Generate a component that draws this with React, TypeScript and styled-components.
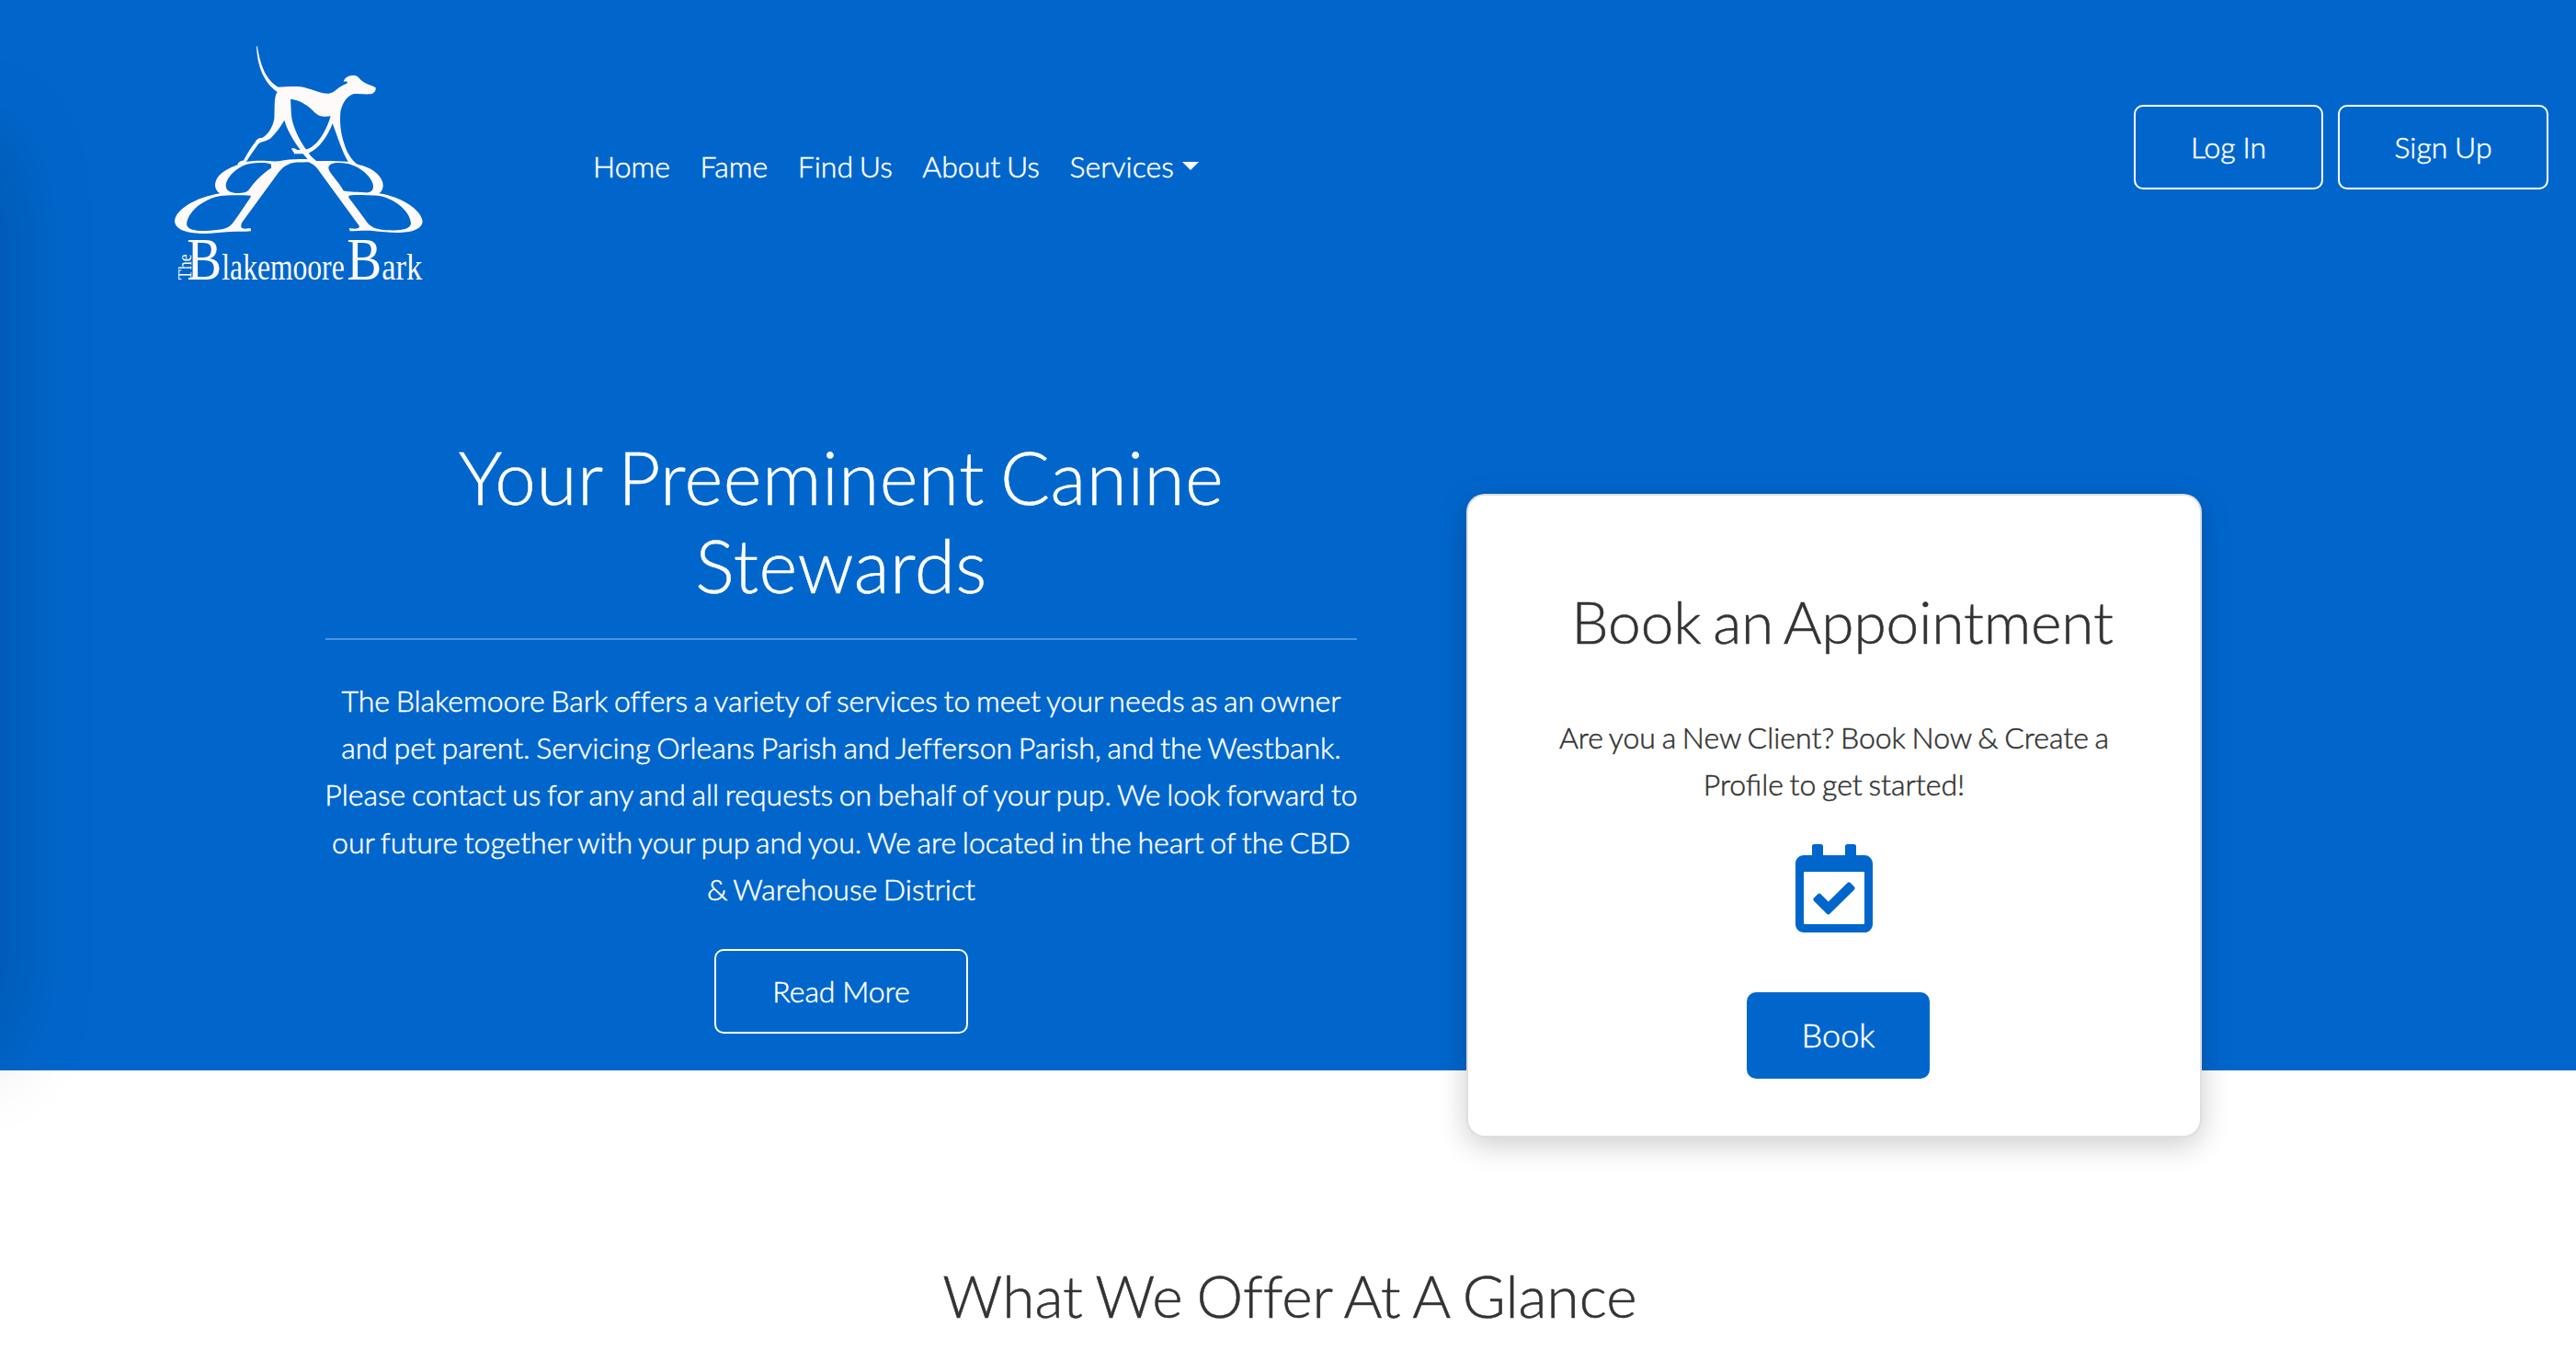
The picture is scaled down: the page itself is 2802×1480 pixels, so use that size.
import React from "react";
import styled, { createGlobalStyle } from "styled-components";
import { FaRegCalendarCheck } from "react-icons/fa";

const blue = "#0066cc";
const ink = "#333333";

const GlobalStyle = createGlobalStyle`
  *, *::before, *::after { box-sizing: border-box; }
  html, body { margin: 0; padding: 0; }
  body {
    width: 2802px;
    height: 1480px;
    overflow: hidden;
    background: #ffffff;
    color: ${ink};
    font-family: Lato, "Noto Sans", sans-serif;
    font-size: 32px;
    font-weight: 300;
    line-height: 1.6;
    word-spacing: -2px;
    -webkit-text-stroke: 0.5px currentColor;
  }
`;

const Page = styled.div`
  position: relative;
  height: 1480px;
  overflow: hidden;
`;

const DrawerShadow = styled.div`
  position: absolute;
  z-index: 2;
  left: -400px;
  top: 120px;
  width: 400px;
  height: 990px;
  box-shadow: 0 32px 96px rgba(0, 0, 0, 0.2);
`;

const Hero = styled.section`
  height: 1164px;
  background: ${blue};
  color: #ffffff;
`;

const Header = styled.header`
  display: flex;
  align-items: flex-start;
  height: 470px;
  padding: 30px 30px 0 170px;
`;

const Brand = styled.a`
  display: block;
  width: 310px;
  height: 300px;
  margin-right: 165px;
`;

const LogoSvg = styled.svg`
  display: block;
  width: 310px;
  height: 300px;
`;

const Nav = styled.nav`
  display: flex;
  gap: 32.6px;
  margin-top: 125px;
`;

const NavLink = styled.a`
  display: flex;
  align-items: center;
  color: #ffffff;
  text-decoration: none;
  white-space: nowrap;
`;

const Caret = styled.span`
  margin-left: 9px;
  border-top: 9.6px solid #ffffff;
  border-left: 9.6px solid transparent;
  border-right: 9.6px solid transparent;
`;

const Actions = styled.div`
  display: flex;
  gap: 16px;
  margin-left: auto;
  margin-top: 84px;
`;

const OutlineButton = styled.button<{ $width: number }>`
  width: ${(p) => p.$width}px;
  height: 92px;
  padding: 0;
  border: 2px solid #ffffff;
  border-radius: 10px;
  background: transparent;
  color: #ffffff;
  font: inherit;
  word-spacing: -1px;
`;

const HeroRow = styled.div`
  display: flex;
  align-items: flex-start;
  padding-left: 354px;
`;

const Intro = styled.div`
  width: 1122px;
  text-align: center;
`;

const Title = styled.h1`
  margin: 0;
  font-size: 80px;
  font-weight: 300;
  line-height: 96px;
  letter-spacing: 0.5px;
  word-spacing: -5px;
`;

const Rule = styled.hr`
  height: 2px;
  margin: 32px 0 40px;
  border: 0;
  background: rgba(255, 255, 255, 0.3);
`;

const Copy = styled.p`
  display: flex;
  flex-direction: column;
  align-items: center;
  margin: 0 0 40px;
  font-variant-ligatures: none;
`;

const Line = styled.span`
  display: block;
  white-space: nowrap;
`;

const Card = styled.article`
  display: flex;
  flex-direction: column;
  align-items: center;
  width: 800px;
  height: 700px;
  margin: 67px 0 0 119px;
  padding-top: 99px;
  border: 2px solid rgba(0, 0, 0, 0.125);
  border-radius: 20px;
  background: #ffffff;
  box-shadow: 0 8px 32px rgba(0, 0, 0, 0.2);
  color: ${ink};
  text-align: center;
`;

const Heading = styled.h2`
  margin: 0;
  padding-left: 4px;
  font-size: 64px;
  font-weight: 300;
  line-height: 76.8px;
  word-spacing: -2.6px;
  white-space: nowrap;
  font-variant-ligatures: none;
`;

const CardHeading = styled(Heading)`
  padding-left: 18px;
  letter-spacing: -0.15px;
  word-spacing: -4.5px;
`;

const CardCopy = styled.p`
  margin: 61px 0 40px;
`;

const CardIcon = styled(FaRegCalendarCheck)`
  width: 84px;
  height: 96px;
  color: ${blue};
`;

const BookButton = styled.button`
  width: 199px;
  height: 94px;
  margin: 65px 0 0 9px;
  padding: 0;
  border: 0;
  border-radius: 10px;
  background: ${blue};
  color: #ffffff;
  font: inherit;
  font-size: 36px;
`;

const Offer = styled.section`
  padding-top: 207px;
  text-align: center;
`;

const LogoText = styled.text`
  fill: #fffafa;
  font-family: "Liberation Serif", serif;
  font-weight: 400;
  -webkit-text-stroke: 0;
`;

const introLines = [
  "The Blakemoore Bark offers a variety of services to meet your needs as an owner",
  "and pet parent. Servicing Orleans Parish and Jefferson Parish, and the Westbank.",
  "Please contact us for any and all requests on behalf of your pup. We look forward to",
  "our future together with your pup and you. We are located in the heart of the CBD",
  "& Warehouse District",
];

const navItems = ["Home", "Fame", "Find Us", "About Us"];

function Logo() {
  return (
    <LogoSvg viewBox="0 0 930 900">
      <g fill="#fffafa" fillRule="evenodd">
        {/* greyhound */}
        <path
          d="M330 62 C338 112 353 168 398 194 C430 193 460 189 490 197 C520 205 540 216 562 215
             C582 213 588 196 622 182 C626 178 624 175 611 176 C615 164 624 157 642 156
             C654 156 660 161 668 172 C682 184 700 187 716 196 C717 206 712 215 700 217
             C680 219 660 214 642 217 C620 225 606 250 601 275 C598 312 602 342 612 375
             C621 405 634 430 657 447 L627 439 C607 408 590 352 575 313
             C562 350 532 396 495 411 L480 412 L450 412 C450 405 442 402 441 394 L451 394 L460 399 L482 399
             C520 395 552 345 569 289 C545 292 530 290 515 275 C500 257 470 236 438 233
             C440 270 440 290 445 308 C455 345 475 380 497 408 C502 420 520 432 530 442 L510 446 L494 430
             C460 388 430 345 418 302 C405 325 390 345 372 362 C355 372 340 372 334 379
             C320 398 305 420 292 440 L266 449 C264 442 272 436 285 433
             C295 415 308 392 322 375 C327 366 331 360 345 360 C365 350 380 325 385 298
             C387 265 383 225 395 210 C348 178 329 120 327 60 Z"
          fillRule="nonzero"
        />
        {/* mirrored letter on the left */}
        <path
          d="M266 448 L292 438 C340 430 370 438 400 436 C430 430 460 428 500 430 L502 439 C470 440 445 438 432 446
             C420 450 410 458 400 471 L280 635 C274 648 275 656 290 656 C298 655 304 655 308 655 L309 664
             C290 667 260 664 230 667 C200 670 170 673 138 671 C90 669 62 655 60 632
             C62 595 125 555 207 541 C195 533 191 520 192 510 C197 478 230 460 266 448 Z
             M375 447 C366 440 335 440 306 444 C262 452 226 492 227 517 C228 534 245 540 265 540
             C285 539 295 539 303 528 C325 496 350 474 375 458 Z
             M308 548 C275 546 235 546 210 549 C150 560 102 602 99 642 C102 658 125 664 160 663
             C205 661 233 659 248 640 C270 610 290 580 308 553 Z"
        />
        {/* letter on the right */}
        <path
          d="M494 430 C503 439 560 433 590 436 L640 438 C648 443 658 447 672 450 C712 461 740 490 740 514
             C740 525 737 534 727 541 C800 552 867 596 869 634 C866 655 840 668 795 669
             C765 670 735 666 705 663 C680 660 655 664 632 664 L629 655 C645 656 658 658 662 652
             C664 646 658 642 652 633 L532 469 C522 452 508 442 494 438 Z
             M562 458 C562 440 592 439 620 443 C666 450 708 492 708 517 C708 536 695 540 680 538
             C645 535 622 537 610 531 C596 501 564 477 562 458 Z
             M628 549 C640 543 700 548 728 549 C784 560 831 604 831 640 C827 660 792 663 762 661
             C720 660 704 652 690 638 C668 608 648 580 628 555 Z"
        />
      </g>
      <LogoText fontSize="60" textLength="84" lengthAdjust="spacingAndGlyphs" transform="translate(114 823) rotate(-90)">
        The
      </LogoText>
      <LogoText x="100" y="822" fontSize="198" textLength="114" lengthAdjust="spacingAndGlyphs">
        B
      </LogoText>
      <LogoText x="214" y="822" fontSize="118" textLength="400" lengthAdjust="spacingAndGlyphs">
        lakemoore
      </LogoText>
      <LogoText x="622" y="822" fontSize="198" textLength="114" lengthAdjust="spacingAndGlyphs">
        B
      </LogoText>
      <LogoText x="736" y="822" fontSize="118" textLength="132" lengthAdjust="spacingAndGlyphs">
        ark
      </LogoText>
    </LogoSvg>
  );
}

export default function App() {
  return (
    <Page>
      <GlobalStyle />
      <DrawerShadow />
      <Hero>
        <Header>
          <Brand>
            <Logo />
          </Brand>
          <Nav>
            {navItems.map((item) => (
              <NavLink key={item}>{item}</NavLink>
            ))}
            <NavLink>
              Services
              <Caret />
            </NavLink>
          </Nav>
          <Actions>
            <OutlineButton $width={206}>Log In</OutlineButton>
            <OutlineButton $width={229}>Sign Up</OutlineButton>
          </Actions>
        </Header>
        <HeroRow>
          <Intro>
            <Title>
              Your Preeminent Canine
              <br />
              Stewards
            </Title>
            <Rule />
            <Copy>
              {introLines.map((line) => (
                <Line key={line}>{line}</Line>
              ))}
            </Copy>
            <OutlineButton $width={276}>Read More</OutlineButton>
          </Intro>
          <Card>
            <CardHeading>Book an Appointment</CardHeading>
            <CardCopy>
              <Line>Are you a New Client? Book Now &amp; Create a</Line>
              <Line>Profile to get started!</Line>
            </CardCopy>
            <CardIcon />
            <BookButton>Book</BookButton>
          </Card>
        </HeroRow>
      </Hero>
      <Offer>
        <Heading>What We Offer At A Glance</Heading>
      </Offer>
    </Page>
  );
}
